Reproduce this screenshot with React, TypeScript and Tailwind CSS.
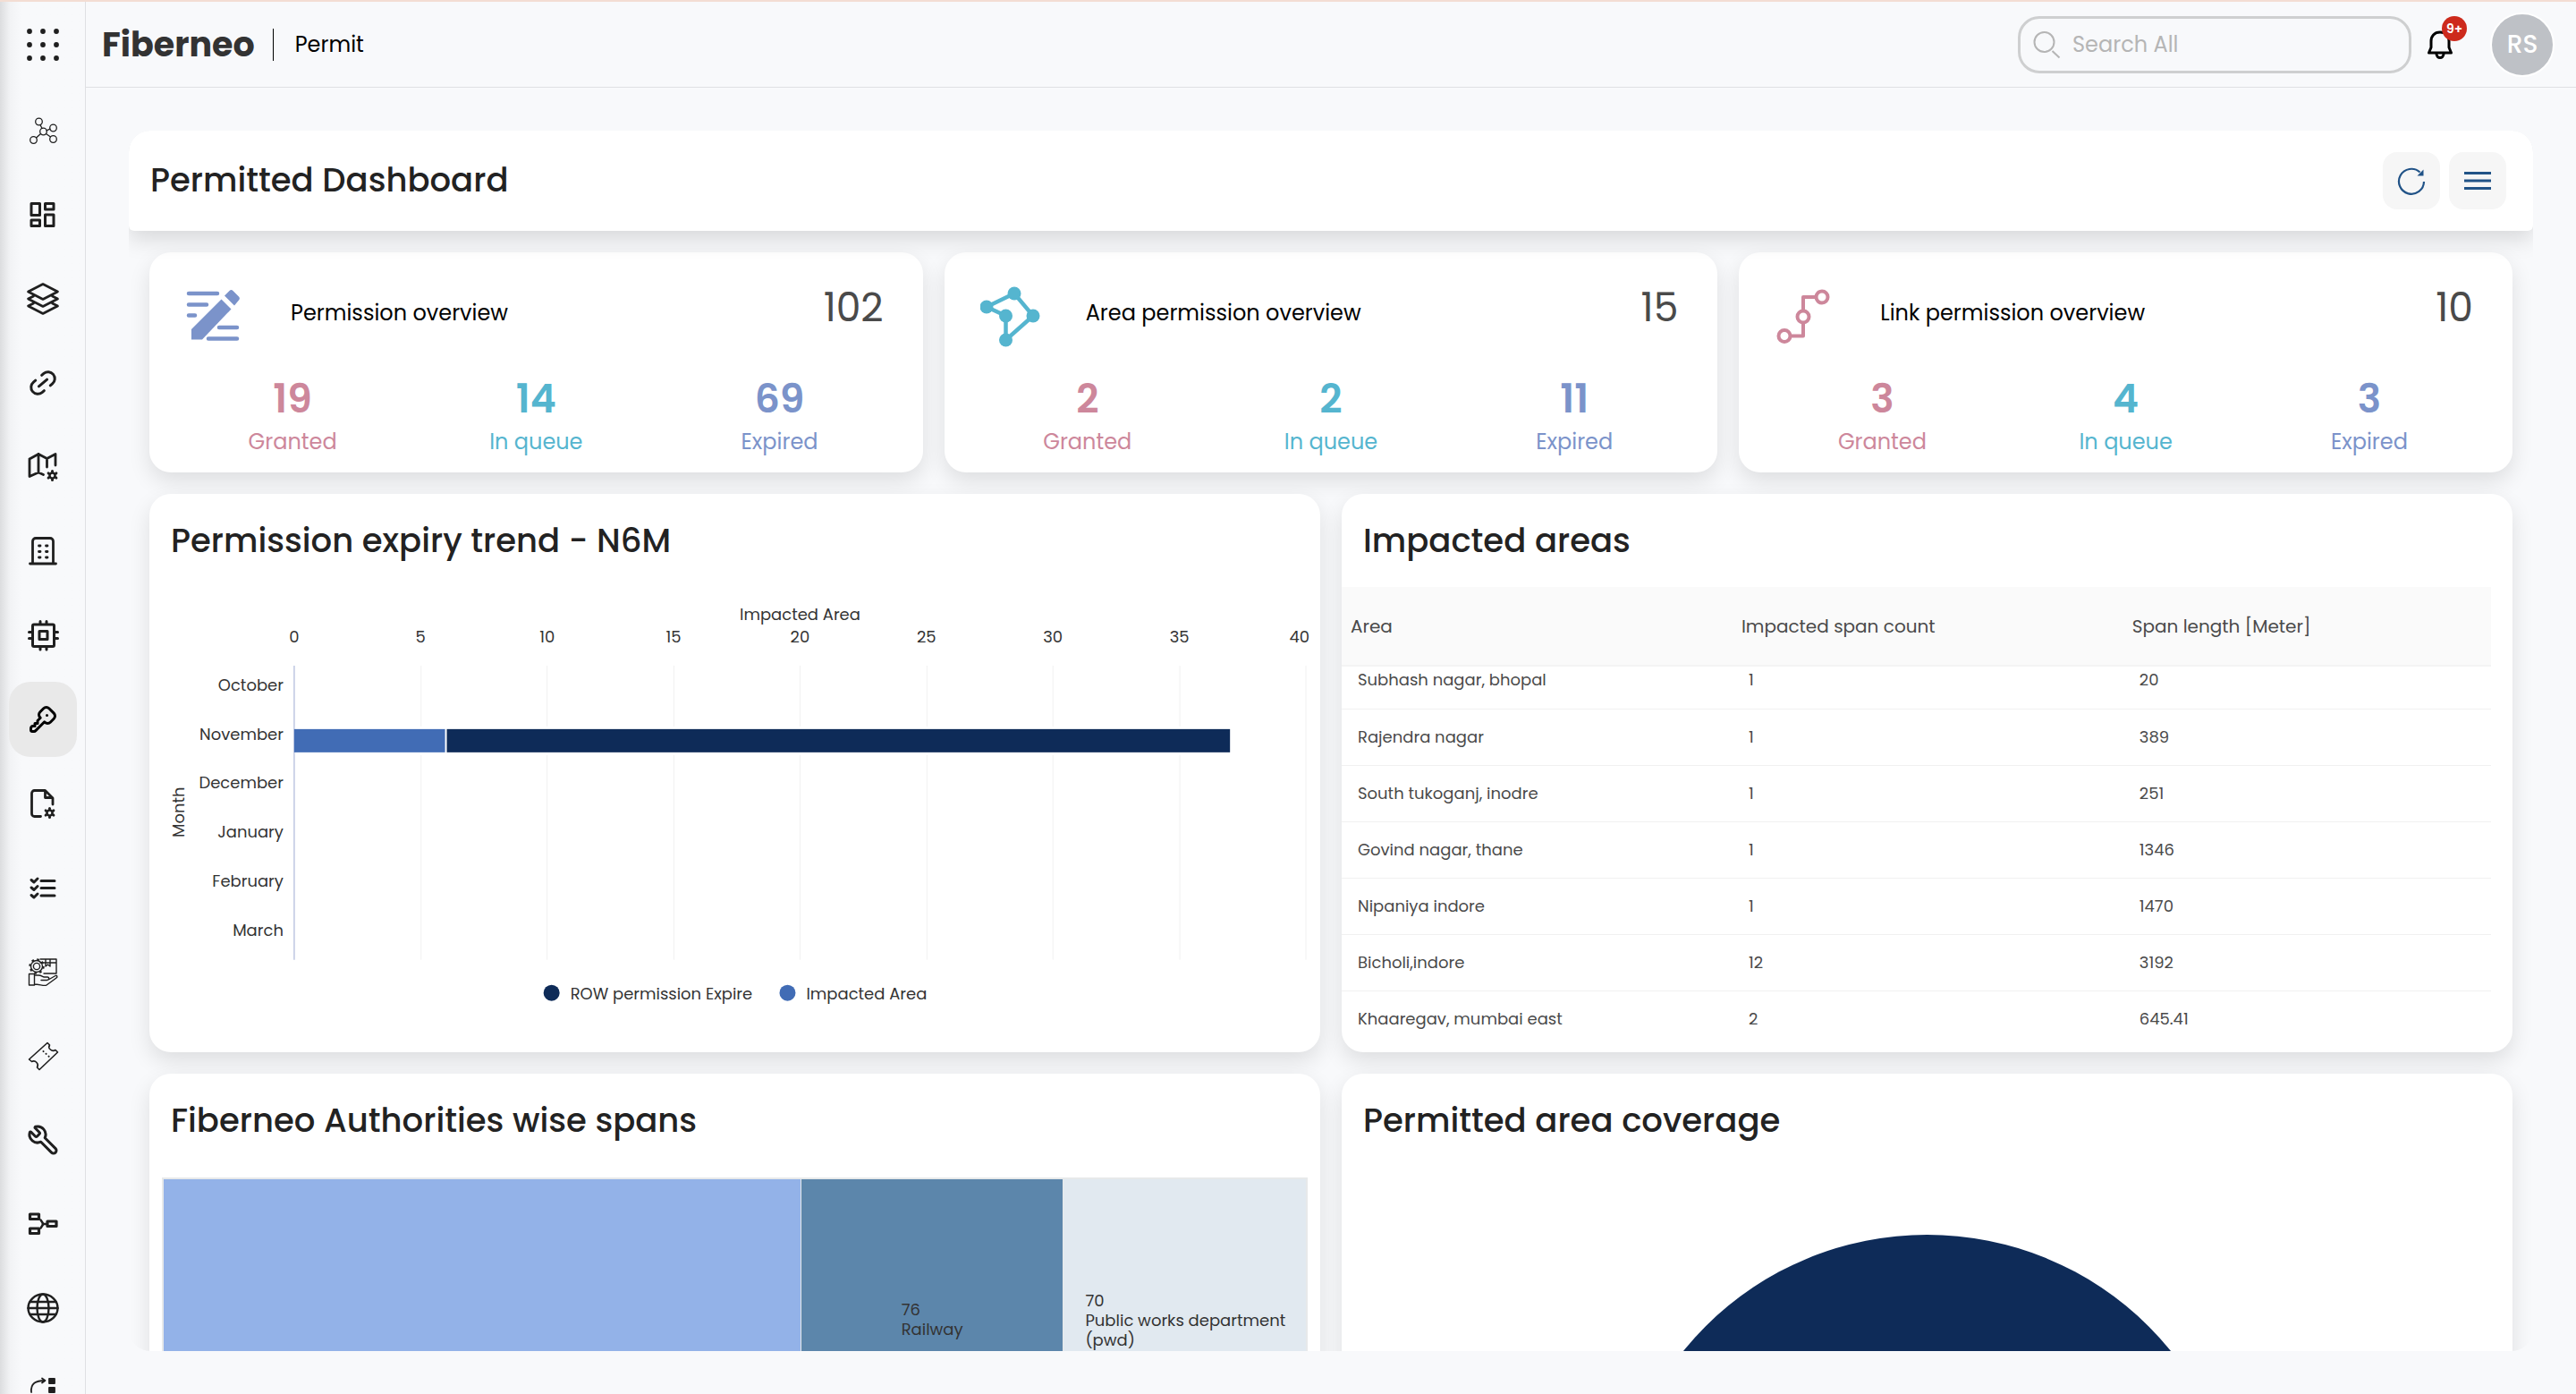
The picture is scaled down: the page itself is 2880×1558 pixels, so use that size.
import React from "react";
import { Link2, Wrench } from "lucide-react";
import { TbKey } from "react-icons/tb";

const INK = "#1f1f1f";

type IconProps = { children: React.ReactNode; box?: number; width?: number };

function Glyph({ children, box = 36, width = 3 }: IconProps) {
  return (
    <svg
      className="size-9"
      viewBox={`0 0 ${box} ${box}`}
      fill="none"
      stroke={INK}
      strokeWidth={width}
      strokeLinecap="round"
      strokeLinejoin="round"
      aria-hidden="true"
    >
      {children}
    </svg>
  );
}

function MiniGear({ x, y }: { x: number; y: number }) {
  return (
    <g transform={`translate(${x} ${y})`} strokeWidth={2}>
      <circle r="3" strokeWidth="2.6" />
      <path strokeWidth="3" d="M0 -4.5V-5M0 4.5V5M-4 -2.3L-4.4 -2.6M4 2.3L4.4 2.6M-4 2.3L-4.4 2.6M4 -2.3L4.4 -2.6" />
    </g>
  );
}

const navItems: { label: string; icon: React.ReactNode; active?: boolean }[] = [
  {
    label: "Network",
    icon: (
      <Glyph width={1.3}>
        <circle cx="13.5" cy="8" r="3.8" />
        <circle cx="29.5" cy="15" r="3.8" />
        <circle cx="18.5" cy="19" r="3.8" />
        <circle cx="7.5" cy="28.5" r="3.8" />
        <circle cx="29.5" cy="27.5" r="3.8" />
        <path d="M15 11.5L17 15.5M22 17.8L26 16.2M21.5 21.5L26.5 25M15.5 21.5L10.5 26" />
      </Glyph>
    ),
  },
  {
    label: "Dashboard",
    icon: (
      <Glyph>
        <rect x="5" y="5.5" width="9.5" height="13" />
        <rect x="20.5" y="5.5" width="9.5" height="6.5" />
        <rect x="5" y="24" width="9.5" height="6.5" />
        <rect x="20.5" y="18" width="9.5" height="12.5" />
      </Glyph>
    ),
  },
  {
    label: "Layers",
    icon: (
      <Glyph width={2.6}>
        <path d="M18 1.5L34.5 10L18 18.5L1.5 10Z" />
        <path d="M7.5 15L1.5 18L18 26.5L34.5 18L28.5 15" />
        <path d="M7.5 23L1.5 26L18 34.5L34.5 26L28.5 23" />
      </Glyph>
    ),
  },
  { label: "Links", icon: <Link2 className="size-9 -rotate-40" color={INK} strokeWidth={2} /> },
  {
    label: "Map settings",
    icon: (
      <Glyph width={2.8}>
        <path d="M3 9L13 3.5L22.5 8.5L32 3.5V16M3 9V28.5L13 24L18.5 26.5M13 3.5V24M22.5 8.5V18" />
        <MiniGear x={28.5} y={27.5} />
      </Glyph>
    ),
  },
  {
    label: "Buildings",
    icon: (
      <Glyph width={2.8}>
        <path d="M6.5 32V7A3.5 3.5 0 0 1 10 3.5H26A3.5 3.5 0 0 1 29.5 7V32M3.5 32H32.5" />
        <path d="M13.5 12H15M21.5 12H23M13.5 18.5H15M21.5 18.5H23M13.5 25H15M21.5 25H23" />
      </Glyph>
    ),
  },
  {
    label: "Devices",
    icon: (
      <Glyph>
        <rect x="6.5" y="6" width="24" height="24.5" rx="1.5" />
        <rect x="14" y="13.5" width="9" height="9" />
        <path d="M15 2.5V5M22 2.5V5M15 31.5V34M22 31.5V34M2.5 14.5H5M2.5 21.5H5M32 14.5H34.5M32 21.5H34.5" />
      </Glyph>
    ),
  },
  { label: "Permits", active: true, icon: <TbKey className="size-9" color="#000" /> },
  {
    label: "File settings",
    icon: (
      <Glyph width={2.8}>
        <path d="M15.5 32.5H8.5A3 3 0 0 1 5.5 29.5V6.5A3 3 0 0 1 8.5 3.5H20.5L29 12V19M20.5 4V11.5H28" />
        <MiniGear x={25.5} y={28.5} />
      </Glyph>
    ),
  },
  {
    label: "Checklist",
    icon: (
      <Glyph>
        <path d="M16 10.5H31M16 18.5H31M16 27H31" />
        <path d="M5 9.5L8 12L12 8M5 18L8 20.5L12 16.5M5 26.5L8 29L12 25" />
      </Glyph>
    ),
  },
  {
    label: "Inventory",
    icon: (
      <Glyph width={1.4}>
        <path d="M15 4H33V20H19M15 8H33M21 4V12L23.5 10L26 12V4" />
        <circle cx="11" cy="12" r="6.5" />
        <circle cx="11" cy="12" r="3.6" />
        <circle cx="11" cy="12" r="7.7" strokeDasharray="2.6 3.45" strokeWidth="2" strokeLinecap="butt" />
        <path d="M2.5 20.5H8.5V33H2.5ZM8.5 22H13C17 22 17 24 19.5 24H23C25.5 24 25 27.5 22.5 27.5H16M25 26.5L32 22.5C34 21.8 34.5 24 33 25L22 33C20 34.5 14 32 8.5 32" />
      </Glyph>
    ),
  },
  {
    label: "Tickets",
    icon: (
      <Glyph width={1.6}>
        <path d="M2.5 22L23 3.5L25.5 6C23 9.5 28 14 32 11.5L34.5 14L14 33.5L11.5 31C14 27 9.5 22.5 5.5 24.5Z" />
        <path d="M18.5 13L18.6 13.1M21.5 15.8L21.6 15.9M24.5 18.6L24.6 18.7" strokeWidth="2" />
      </Glyph>
    ),
  },
  { label: "Maintenance", icon: <Wrench className="size-9 -scale-x-100" color={INK} strokeWidth={2} /> },
  {
    label: "Workflow",
    icon: (
      <Glyph width={3.2}>
        <rect x="3.5" y="7" width="10" height="5.5" />
        <rect x="3.5" y="23" width="10" height="5.5" />
        <rect x="23" y="15" width="10" height="5.5" />
        <path d="M15.5 13.5L18.5 18L15.5 22.5M17.5 18H22" strokeWidth="2.4" />
      </Glyph>
    ),
  },
  {
    label: "Global",
    icon: (
      <Glyph width={2.4}>
        <ellipse cx="18" cy="18" rx="16.5" ry="15.5" />
        <ellipse cx="18" cy="18" rx="6.5" ry="15.5" />
        <path d="M1.5 18H34.5M3.5 11H32.5M3.5 25H32.5" />
      </Glyph>
    ),
  },
  {
    label: "Transfers",
    icon: (
      <Glyph width={1.8}>
        <path d="M5 18C4 8 10 5 20 5M17 2.5L20.5 5L17 7.5" />
        <path d="M25 3H31V8H25ZM25 13H31V18H25Z" fill={INK} />
      </Glyph>
    ),
  },
];

function Sidebar() {
  return (
    <nav
      aria-label="Main"
      className="flex w-24 shrink-0 flex-col items-center overflow-hidden border-r border-[#dfe0e3] bg-linear-to-r from-[#dcdddf] via-[#f2f3f5] via-12% to-[#f8f9fb] to-25%"
    >
      <button aria-label="All apps" className="mt-6 mb-7.5 flex size-12 shrink-0 items-center justify-center">
        <svg className="size-9" viewBox="0 0 36 36" fill={INK} aria-hidden="true">
          {[3, 18, 33].map((y) => [3, 18, 33].map((x) => <circle key={`${x}-${y}`} cx={x} cy={y} r="2.9" />))}
        </svg>
      </button>
      <ul className="flex flex-col gap-2.5">
        {navItems.map((item) => (
          <li key={item.label}>
            <a
              href="#"
              aria-label={item.label}
              className={
                item.active
                  ? "flex h-21 w-19 items-center justify-center rounded-3xl bg-[#e9e9e9]"
                  : "flex h-21 w-19 items-center justify-center rounded-3xl"
              }
            >
              {item.icon}
            </a>
          </li>
        ))}
      </ul>
    </nav>
  );
}

function Header() {
  return (
    <header className="flex h-24 shrink-0 items-center border-b border-[#dfe0e3] pr-6 pl-4.5">
      <span className="text-[38px] font-bold text-[#333]">Fiberneo</span>
      <span className="mr-6 ml-5 h-9 w-px bg-black" />
      <span className="text-2xl text-black">Permit</span>
      <label className="ml-auto flex h-16 w-110 items-center gap-3 rounded-3xl border-3 border-[#cecfd0] px-3.5">
        <svg className="size-8 shrink-0" viewBox="0 0 32 32" fill="none" stroke="#b5b5b5" strokeWidth="2" aria-hidden="true">
          <circle cx="12.5" cy="13" r="11" />
          <path d="M21.5 23L29.5 30.5" />
        </svg>
        <input
          type="search"
          aria-label="Search all"
          placeholder="Search All"
          className="min-w-0 flex-1 bg-transparent text-2xl outline-none placeholder:text-[#b5b5b5]"
        />
      </label>
      <button aria-label="Notifications" className="relative ml-3.5 flex size-9 items-center justify-center">
        <svg className="size-9" viewBox="0 0 36 36" fill="none" stroke="#000" strokeWidth="3" strokeLinejoin="round" aria-hidden="true">
          <path d="M18 4C11.5 4 8 8.5 8 14V21L5.5 27H30.5L28 21V14C28 8.500 24.5 4 18 4Z" />
          <path d="M14 28C14 34 22 34 22 28" />
        </svg>
        <span className="absolute -top-3.5 left-5 flex size-7 items-center justify-center rounded-full bg-[#cd2a1c] text-sm font-semibold text-white">
          9+
        </span>
      </button>
      <button
        aria-label="Account"
        className="ml-9.5 flex size-18 items-center justify-center rounded-full border-2 border-white bg-[#bec1c6] text-[28px] font-medium text-white"
      >
        RS
      </button>
    </header>
  );
}

const granted = "text-[#cd879b]";
const queued = "text-[#55b5cf]";
const expired = "text-[#7b93ca]";

function PermissionIcon() {
  return (
    <svg className="size-16" viewBox="0 0 64 64" fill="none" stroke="#7b93ca" strokeWidth="4.5" strokeLinecap="round" aria-hidden="true">
      <path d="M4 6H36M4 18.5H24M4 30.5H11M38 44H58M26 56.5H58" />
      <path d="M7 46L40.5 12.5L51.5 23.5L19 57.5H7Z" fill="#7b93ca" stroke="none" />
      <path d="M44 8.5L49.5 3A3 3 0 0 1 53.5 3L60 9.5A3 3 0 0 1 60 13.5L55 19.5Z" fill="#7b93ca" stroke="none" />
    </svg>
  );
}

function AreaIcon() {
  const nodes = [[38, 8], [7, 23], [28.5, 33], [59, 33], [28.5, 60]];
  return (
    <svg className="size-17" viewBox="0 0 68 68" fill="#55b5cf" stroke="#55b5cf" strokeWidth="4.5" aria-hidden="true">
      <path d="M7 23L38 8L59 33L28.5 60V33Z" fill="none" />
      {nodes.map(([x, y]) => (
        <circle key={`${x}-${y}`} cx={x} cy={y} r="7.5" stroke="none" />
      ))}
    </svg>
  );
}

function LinkIcon() {
  const nodes = [[53, 12], [32, 34], [11, 55.5]];
  return (
    <svg className="size-17" viewBox="0 0 68 68" fill="none" stroke="#cd879b" strokeWidth="4" aria-hidden="true">
      <path d="M46 12H32V27M32 41V55.5H18" strokeLinejoin="round" />
      {nodes.map(([x, y]) => (
        <circle key={x} cx={x} cy={y} r="6.5" />
      ))}
    </svg>
  );
}

const overviews = [
  { title: "Permission overview", total: 102, values: [19, 14, 69], icon: <PermissionIcon /> },
  { title: "Area permission overview", total: 15, values: [2, 2, 11], icon: <AreaIcon /> },
  { title: "Link permission overview", total: 10, values: [3, 4, 3], icon: <LinkIcon /> },
];

const statKinds = [
  { label: "Granted", tone: granted },
  { label: "In queue", tone: queued },
  { label: "Expired", tone: expired },
];

const cardStyle = "rounded-3xl bg-white shadow-[0_10px_24px_rgba(0,0,0,0.11)]";

function OverviewCard({ title, total, values, icon }: (typeof overviews)[number]) {
  return (
    <section className={`${cardStyle} px-6 pt-9 pb-3.5`}>
      <div className="flex h-18 items-center px-4 pr-5">
        <div className="w-29.5 shrink-0">{icon}</div>
        <h2 className="self-start text-2xl leading-16 text-black">{title}</h2>
        <span className="ml-auto self-start text-[44px] leading-13 text-[#4a4a4a]">{total}</span>
      </div>
      <dl className="mt-7 grid grid-cols-3 text-center">
        {statKinds.map((kind, i) => (
          <div key={kind.label} className={`flex flex-col-reverse ${kind.tone}`}>
            <dt className="text-2xl leading-10">{kind.label}</dt>
            <dd className="text-[44px] leading-14 font-semibold">{values[i]}</dd>
          </div>
        ))}
      </dl>
    </section>
  );
}

const months = ["October", "November", "December", "January", "February", "March"];
const ticks = [0, 5, 10, 15, 20, 25, 30, 35, 40];
const plot = { left: 162, right: 1294, top: 88, bottom: 417 };
const scaleX = (v: number) => plot.left + ((plot.right - plot.left) * v) / 40;

function ExpiryChart() {
  const band = (plot.bottom - plot.top) / months.length;
  return (
    <svg viewBox="0 0 1310 520" className="block w-full" role="img" aria-label="Permission expiry by month" fontSize="18" fill="#333">
      <text x="728" y="37" textAnchor="middle">Impacted Area</text>
      {ticks.map((t) => (
        <g key={t}>
          <text x={t === 40 ? 1298 : scaleX(t)} y="62" textAnchor={t === 40 ? "end" : "middle"}>{t}</text>
          <path d={`M${Math.round(scaleX(t))} ${plot.top}V${plot.bottom}`} stroke={t === 0 ? "#ccd3e8" : "#f1f1f1"} strokeWidth={t === 0 ? 2 : 1} />
        </g>
      ))}
      {months.map((m, i) => (
        <text key={m} x="150" y={plot.top + band * i + 28} textAnchor="end">{m}</text>
      ))}
      <rect x={plot.left + 1} y="156" width="1050" height="32" fill="#fff" />
      <rect x={plot.left} y="159" width={scaleX(6) - plot.left - 1} height="26" fill="#416cb5" />
      <rect x={scaleX(6) + 1} y="159" width={scaleX(37) - scaleX(6) - 1} height="26" fill="#0e2b58" />
      <text x="0" y="0" transform="translate(39 252) rotate(-90)" textAnchor="middle">Month</text>
      <circle cx="450" cy="454" r="9" fill="#0e2b58" />
      <text x="471" y="461">ROW permission Expire</text>
      <circle cx="714" cy="454" r="9" fill="#416cb5" />
      <text x="735" y="461">Impacted Area</text>
    </svg>
  );
}

const areas = [
  ["Subhash nagar, bhopal", "1", "20"],
  ["Rajendra nagar", "1", "389"],
  ["South tukoganj, inodre", "1", "251"],
  ["Govind nagar, thane", "1", "1346"],
  ["Nipaniya indore", "1", "1470"],
  ["Bicholi,indore", "12", "3192"],
  ["Khaaregav, mumbai east", "2", "645.41"],
];

function ImpactedTable() {
  return (
    <div className="pr-6">
      <table className="w-full table-fixed border-collapse text-left text-[#4a4a4a]">
        <colgroup>
          <col className="w-[34%]" />
          <col className="w-[34%]" />
          <col />
        </colgroup>
        <thead>
          <tr className="h-22 border-b-2 border-[#f4f4f4] bg-[#fafafa] text-xl">
            {["Area", "Impacted span count", "Span length [Meter]"].map((h) => (
              <th key={h} scope="col" className="px-2.5 font-normal">{h}</th>
            ))}
          </tr>
        </thead>
        <tbody className="text-lg">
          {areas.map((row, i) => (
            <tr key={row[0]} className={i === areas.length - 1 ? "" : "border-b border-[#f1f1f1]"}>
              {row.map((cell, c) => (
                <td key={c} className={i === 0 ? "h-12 px-4.5 pb-4 leading-6" : "h-[63px] px-4.5 leading-6"}>{cell}</td>
              ))}
            </tr>
          ))}
        </tbody>
      </table>
    </div>
  );
}

function AuthoritiesTreemap() {
  return (
    <div className="mx-3.5 mt-3 grid h-96 grid-cols-[713fr_293fr_271fr] gap-px border-2 border-[#e7e9ea] bg-[#e7e9ea] text-lg leading-[22px] text-[#333]">
      <div className="bg-[#93b2e8]" />
      <div className="flex justify-center bg-[#5c86ab] pt-[135px]">
        <p>76<br />Railway</p>
      </div>
      <div className="bg-[#e1e9f0] pt-[125px] pl-6">
        <p>70<br />Public works department<br />(pwd)</p>
      </div>
    </div>
  );
}

function CoveragePie() {
  return (
    <svg viewBox="0 0 1310 800" className="block w-full" role="img" aria-label="Permitted area coverage">
      <circle cx="655" cy="427" r="351" fill="#0e2b58" />
    </svg>
  );
}

function Panel({ title, children }: { title: string; children: React.ReactNode }) {
  return (
    <section className={`${cardStyle} min-w-0 overflow-hidden`}>
      <h2 className="px-6 py-6 text-[37px] leading-14 font-medium text-[#222]">{title}</h2>
      {children}
    </section>
  );
}

export default function App() {
  return (
    <div className="flex h-screen flex-col overflow-hidden border-t-2 border-[#f3ddd3] bg-[#f8f9fb] font-['Poppins','Inter',sans-serif]">
      <div className="flex min-h-0 flex-1">
        <Sidebar />
        <div className="flex min-w-0 flex-1 flex-col">
          <Header />
          <main className="flex min-h-0 flex-1 flex-col p-12">
            <div className="flex min-h-0 flex-1 flex-col overflow-hidden rounded-3xl">
              <div className="z-10 flex h-28 shrink-0 items-center justify-between rounded-t-3xl rounded-b-md bg-white pr-7.5 pl-6 shadow-[0_10px_24px_rgba(0,0,0,0.13)]">
                <h1 className="text-[37px] font-medium text-[#222]">Permitted Dashboard</h1>
                <div className="flex gap-2.5">
                  <button aria-label="Refresh" className="flex size-16 items-center justify-center rounded-2xl bg-[#f6f6f6]">
                    <svg className="size-8" viewBox="0 0 32 32" fill="none" stroke="#215387" strokeWidth="2.2" aria-hidden="true">
                      <path d="M30 17A14 14 0 1 1 25.5 6.5" />
                      <path d="M29.5 3.5V10.5H22.5Z" fill="#215387" stroke="none" />
                    </svg>
                  </button>
                  <button aria-label="Menu" className="flex size-16 items-center justify-center rounded-2xl bg-[#f6f6f6]">
                    <svg className="size-8" viewBox="0 0 32 32" stroke="#215387" strokeWidth="3" aria-hidden="true">
                      <path d="M1 7.5H31M1 16H31M1 24.5H31" />
                    </svg>
                  </button>
                </div>
              </div>
              <div className="flex min-h-0 flex-1 flex-col gap-6 px-[23px] pt-6">
                <div className="grid shrink-0 grid-cols-3 gap-6">
                  {overviews.map((o) => (
                    <OverviewCard key={o.title} {...o} />
                  ))}
                </div>
                <div className="grid shrink-0 grid-cols-2 gap-6">
                  <Panel title="Permission expiry trend - N6M">
                    <ExpiryChart />
                  </Panel>
                  <Panel title="Impacted areas">
                    <ImpactedTable />
                  </Panel>
                  <Panel title="Fiberneo Authorities wise spans">
                    <AuthoritiesTreemap />
                  </Panel>
                  <Panel title="Permitted area coverage">
                    <CoveragePie />
                  </Panel>
                </div>
              </div>
            </div>
          </main>
        </div>
      </div>
    </div>
  );
}
